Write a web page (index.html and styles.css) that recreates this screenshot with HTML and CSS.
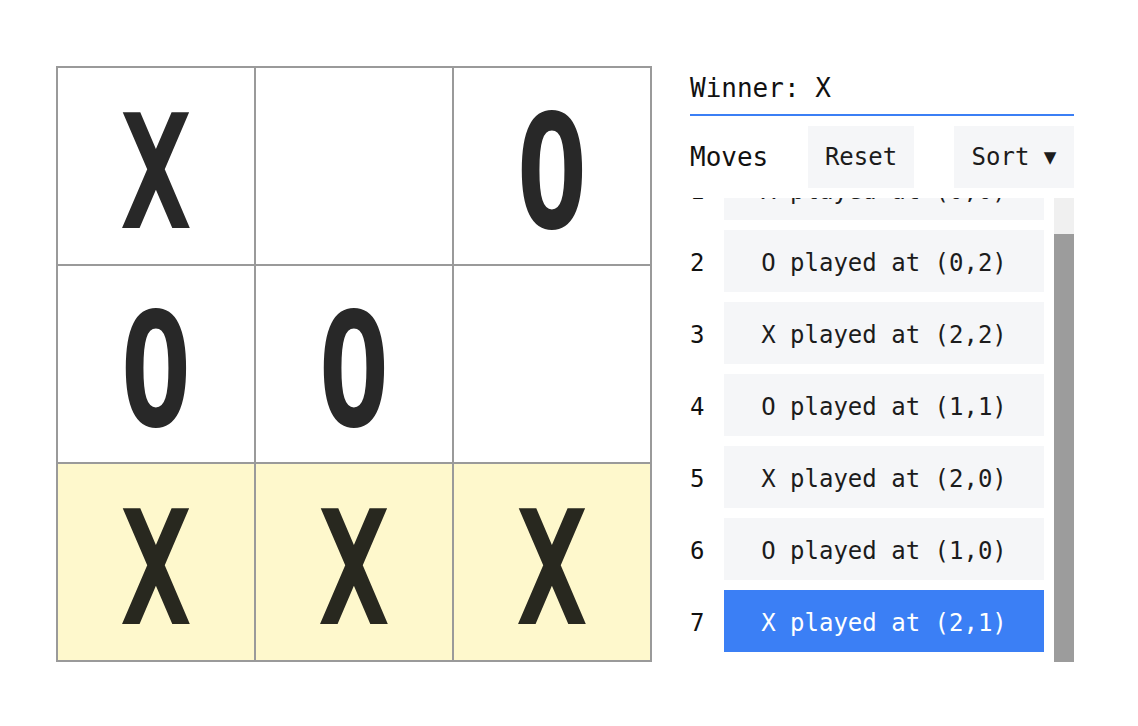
FILE: index.html
```html
<!DOCTYPE html>
<html lang="en">
<head>
<meta charset="utf-8">
<title>Tic-Tac-Toe</title>
<link rel="stylesheet" href="styles.css">
</head>
<body>
<div class="app">
  <div class="board">
    <div class="cell"><span class="mark">X</span></div>
    <div class="cell"><span class="mark"></span></div>
    <div class="cell"><span class="mark">O</span></div>
    <div class="cell"><span class="mark">O</span></div>
    <div class="cell"><span class="mark">O</span></div>
    <div class="cell"><span class="mark"></span></div>
    <div class="cell cell-win"><span class="mark">X</span></div>
    <div class="cell cell-win"><span class="mark">X</span></div>
    <div class="cell cell-win"><span class="mark">X</span></div>
  </div>
  <div class="panel">
    <div class="status">Winner: X</div>
    <div class="controls">
      <span class="moves-label">Moves</span>
      <button class="btn btn-reset">Reset</button>
      <button class="btn btn-sort">Sort <span class="arrow">▼</span></button>
    </div>
    <div class="moves-wrap">
      <ol class="moves-list">
        <li class="move"><span class="move-num">1</span><button class="move-btn">X played at (0,0)</button></li>
        <li class="move"><span class="move-num">2</span><button class="move-btn">O played at (0,2)</button></li>
        <li class="move"><span class="move-num">3</span><button class="move-btn">X played at (2,2)</button></li>
        <li class="move"><span class="move-num">4</span><button class="move-btn">O played at (1,1)</button></li>
        <li class="move"><span class="move-num">5</span><button class="move-btn">X played at (2,0)</button></li>
        <li class="move"><span class="move-num">6</span><button class="move-btn">O played at (1,0)</button></li>
        <li class="move"><span class="move-num">7</span><button class="move-btn move-btn-active">X played at (2,1)</button></li>
      </ol>
      <div class="scroll-track"><div class="scroll-thumb"></div></div>
    </div>
  </div>
</div>
<script src="script.js"></script>
</body>
</html>
```

FILE: styles.css
```css
* { box-sizing: border-box; }

html, body {
  margin: 0;
  padding: 0;
  background: #ffffff;
}

body {
  font-family: "DejaVu Sans Mono", "Liberation Mono", monospace;
  color: #1c1c1c;
}

.app {
  display: flex;
  align-items: flex-start;
  gap: 38px;
  padding: 66px 0 0 56px;
}

.board {
  display: grid;
  grid-template-columns: repeat(3, 196px);
  grid-template-rows: repeat(3, 196px);
  gap: 2px;
  padding: 2px;
  background: #9a9a9a;
}

.cell {
  background: #ffffff;
  display: flex;
  align-items: center;
  justify-content: center;
  padding-top: 12px;
}

.cell-win {
  background: #fef8cc;
}

.mark {
  display: inline-block;
  font-family: "DejaVu Sans Mono", monospace;
  font-weight: bold;
  font-size: 159px;
  line-height: 1;
  color: #282828;
  transform: scaleX(0.74);
}

.cell-win .mark {
  color: #28281f;
}

.panel {
  width: 384px;
  display: flex;
  flex-direction: column;
}

.status {
  height: 50px;
  font-size: 26px;
  line-height: 44px;
  border-bottom: 2px solid #3b7ff5;
  color: #111111;
}

.controls {
  margin-top: 10px;
  height: 62px;
  display: flex;
  align-items: center;
  gap: 40px;
}

.moves-label {
  font-size: 26px;
  width: 78px;
  color: #111111;
}

.btn {
  height: 62px;
  border: none;
  background: #f5f6f8;
  font-family: inherit;
  font-size: 24px;
  color: #1c1c1c;
  padding: 0;
}

.btn-reset { width: 106px; }
.btn-sort { width: 120px; }

.arrow {
  font-size: 21px;
  vertical-align: 1px;
}

.moves-wrap {
  position: relative;
  margin-top: 10px;
  height: 464px;
}

.moves-list {
  list-style: none;
  margin: 0;
  padding: 0;
  height: 464px;
  overflow-y: scroll;
  scrollbar-width: none;
}

.moves-list::-webkit-scrollbar {
  display: none;
}

.scroll-track {
  position: absolute;
  top: 0;
  right: 0;
  width: 20px;
  height: 464px;
  background: #f0f0f0;
}

.scroll-thumb {
  position: absolute;
  left: 0;
  bottom: 0;
  width: 20px;
  height: 428px;
  background: #9c9c9c;
}

.move {
  display: flex;
  align-items: center;
  padding-bottom: 10px;
}

.move-num {
  width: 34px;
  padding-top: 4px;
  font-size: 24px;
  color: #111111;
}

.move-btn {
  width: 320px;
  height: 62px;
  border: none;
  padding: 3px 0 0 0;
  background: #f5f6f8;
  font-family: inherit;
  font-size: 24px;
  color: #1c1c1c;
}

.move-btn-active {
  background: #3b7ff5;
  color: #ffffff;
}
```

FILE: script.js
```js
var list = document.querySelector('.moves-list');
list.scrollTop = list.scrollHeight;
```
